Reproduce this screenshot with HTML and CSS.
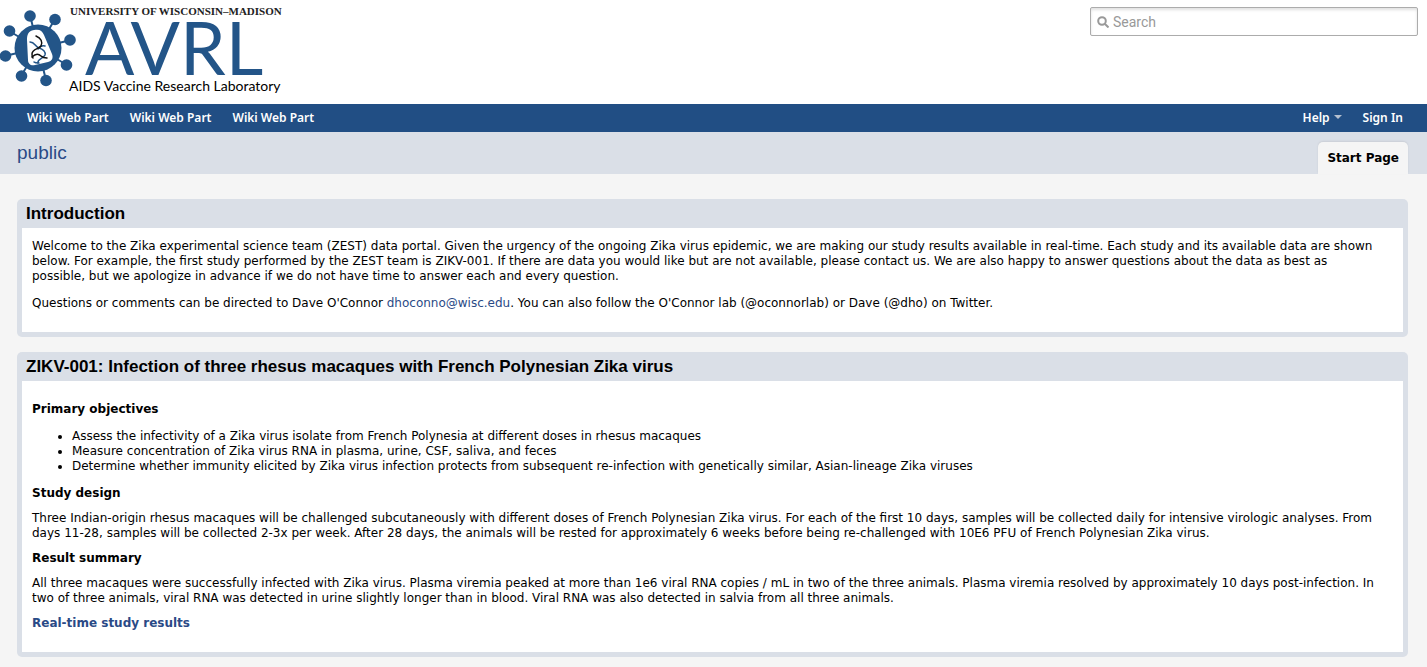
FILE: index.html
```
<!DOCTYPE html>
<html lang="en">
<head>
    <meta charset="UTF-8">
    <meta name="viewport" content="width=device-width, initial-scale=1.0">
    <title>Start Page: public</title>
    <link rel="stylesheet" href="styles.css">
</head>
<body>
    <header class="header">
        <a class="logo" href="#" aria-label="AVRL home">
            <svg width="290" height="104" viewBox="0 0 290 104">
                <!-- virus -->
                <g stroke="#235588" stroke-width="2">
                    <path d="M38 48L30 15M38 48L55 19M38 48L71 40M38 48L67 65M38 48L46 80M38 48L21 76M38 48L5 56M38 48L9 31"/>
                </g>
                <g fill="#235588">
                    <circle cx="38" cy="48" r="23.5"/>
                    <circle cx="30" cy="16" r="5.8"/>
                    <circle cx="55" cy="19.5" r="5.8"/>
                    <circle cx="70" cy="40" r="5.8"/>
                    <circle cx="66.5" cy="65" r="5.8"/>
                    <circle cx="46" cy="80.5" r="5.8"/>
                    <circle cx="21.5" cy="76" r="5.8"/>
                    <circle cx="5.5" cy="56" r="5.8"/>
                    <circle cx="9.5" cy="31" r="5.8"/>
                </g>
                <path fill="#fff" d="M34 30c5-1 8 0 10 5l8 19c1.5 4 0 7-4 8l-13 3c-4 1-7-1-7-5l-1-20c0-5 1-9 7-10z"/>
                <!-- dna strands -->
                <g fill="none" stroke-linecap="round" stroke-width="1.5">
                    <path stroke="#235588" d="M30 42C35 42 35 47 39 48C43 49 46 52 45 55C43 59 37 59 38 63"/>
                    <path stroke="#235588" d="M45 46C42 45 40 46 38 49M34 62C35 63 37 63 39 63"/>
                    <path stroke="#111" d="M36 36C41 38 43 42 41 46C39 49 32 49 32 54C32 56 32 57 33 58"/>
                    <path stroke="#111" d="M32 57C36 53 39 54 41 56C43 58 45 58 47 58"/>
                </g>
                <text class="logo-top" x="70" y="15">UNIVERSITY OF WISCONSIN–MADISON</text>
                <text class="logo-name" x="85" y="75">AVRL</text>
                <text class="logo-bottom" x="69" y="91">AIDS Vaccine Research Laboratory</text>
            </svg>
        </a>
        <form class="search">
            <svg width="12" height="12" viewBox="0 0 12 12" fill="none" stroke="#999" stroke-width="2">
                <circle cx="5" cy="5" r="3.8"/>
                <path d="M8 8l3.5 3.5"/>
            </svg>
            <input type="text" placeholder="Search" aria-label="Search">
        </form>
    </header>

    <nav class="menubar">
        <div class="menu-left">
            <a href="#">Wiki Web Part</a>
            <a href="#">Wiki Web Part</a>
            <a href="#">Wiki Web Part</a>
        </div>
        <div class="menu-right">
            <button type="button">Help <span class="arrow"></span></button>
            <a href="#">Sign In</a>
        </div>
    </nav>

    <div class="folder-bar">
        <a class="folder-title" href="#">public</a>
        <a class="tab" href="#">Start Page</a>
    </div>

    <main class="content">
        <section class="panel">
            <h2>Introduction</h2>
            <div class="panel-body">
                <p>Welcome to the Zika experimental science team (ZEST) data portal. Given the urgency of the ongoing Zika virus epidemic, we are making our study results available in real-time. Each study and its available data are shown below. For example, the first study performed by the ZEST team is ZIKV-001. If there are data you would like but are not available, please contact us. We are also happy to answer questions about the data as best as possible, but we apologize in advance if we do not have time to answer each and every question.</p>
                <p>Questions or comments can be directed to Dave O'Connor <a href="mailto:dhoconno@wisc.edu">dhoconno@wisc.edu</a>. You can also follow the O'Connor lab (@oconnorlab) or Dave (@dho) on Twitter.</p>
            </div>
        </section>

        <section class="panel">
            <h2>ZIKV-001: Infection of three rhesus macaques with French Polynesian Zika virus</h2>
            <div class="panel-body study">
                <h3>Primary objectives</h3>
                <ul>
                    <li>Assess the infectivity of a Zika virus isolate from French Polynesia at different doses in rhesus macaques</li>
                    <li>Measure concentration of Zika virus RNA in plasma, urine, CSF, saliva, and feces</li>
                    <li>Determine whether immunity elicited by Zika virus infection protects from subsequent re-infection with genetically similar, Asian-lineage Zika viruses</li>
                </ul>
                <h3>Study design</h3>
                <p>Three Indian-origin rhesus macaques will be challenged subcutaneously with different doses of French Polynesian Zika virus. For each of the first 10 days, samples will be collected daily for intensive virologic analyses. From days 11-28, samples will be collected 2-3x per week. After 28 days, the animals will be rested for approximately 6 weeks before being re-challenged with 10E6 PFU of French Polynesian Zika virus.</p>
                <h3>Result summary</h3>
                <p>All three macaques were successfully infected with Zika virus. Plasma viremia peaked at more than 1e6 viral RNA copies / mL in two of the three animals. Plasma viremia resolved by approximately 10 days post-infection. In two of three animals, viral RNA was detected in urine slightly longer than in blood. Viral RNA was also detected in salvia from all three animals.</p>
                <h3><a href="#">Real-time study results</a></h3>
            </div>
        </section>
    </main>
</body>
</html>
```
FILE: styles.css
```
* {
    margin: 0;
    padding: 0;
    box-sizing: border-box;
}

body {
    background: #f5f5f5;
    color: #000;
    font-family: Verdana, 'DejaVu Sans', sans-serif;
    font-size: 12px;
    line-height: 15px;
}

a {
    color: #2a4a86;
    text-decoration: none;
}

a:hover {
    text-decoration: underline;
}

.header {
    background: #fff;
    display: flex;
    justify-content: space-between;
    align-items: flex-start;
    padding-right: 9px;
}

.logo svg {
    display: block;
}

.logo-top {
    font: bold 11px 'Liberation Serif', serif;
    fill: #222;
}

.logo-name {
    font: 73px Lato, sans-serif;
    fill: #235588;
}

.logo-bottom {
    font: 14px Lato, sans-serif;
    fill: #000;
}

.search {
    display: flex;
    align-items: center;
    gap: 4px;
    width: 328px;
    height: 29px;
    margin-top: 7px;
    padding: 0 7px 0 6px;
    border: 1px solid #acacac;
    border-radius: 2px;
    box-shadow: inset 0 2px 3px rgba(0, 0, 0, 0.12);
}

.search input {
    flex: 1;
    border: 0;
    outline: 0;
    background: transparent;
    font: 14px Roboto, sans-serif;
}

.search input::placeholder {
    color: #999;
    opacity: 1;
}

.menubar {
    background: #214e84;
    height: 28px;
    display: flex;
    justify-content: space-between;
    align-items: center;
    padding: 0 24px 2px 27px;
}

.menu-left,
.menu-right {
    display: flex;
    align-items: center;
    gap: 21px;
}

.menubar a,
.menubar button {
    color: #fff;
    font: 600 12px/15px 'Noto Sans', sans-serif;
    background: none;
    border: 0;
}

.menubar button {
    display: flex;
    align-items: center;
    gap: 4px;
    cursor: pointer;
}

.arrow {
    border: 4px solid transparent;
    border-top-color: #b5c0cf;
    border-bottom: 0;
}

.folder-bar {
    background: #dadfe7;
    height: 42px;
    display: flex;
    justify-content: space-between;
    align-items: flex-end;
    padding: 0 19px 0 17px;
}

.folder-title {
    font: 19px/22px 'Liberation Sans', Arial, sans-serif;
    align-self: flex-start;
    margin-top: 10px;
}

.tab {
    background: #f5f5f5;
    color: #000;
    font-weight: bold;
    line-height: 32px;
    padding: 0 9px;
    border-radius: 5px 5px 0 0;
    box-shadow: 0 -1px 2px rgba(0, 0, 0, 0.08);
}

.content {
    padding: 25px 19px 10px 17px;
}

.panel {
    background: #dadfe7;
    border-radius: 5px;
    padding: 0 5px 5px;
    margin-bottom: 15px;
}

.panel:last-child {
    margin-bottom: 0;
}

.panel h2 {
    font: bold 17px/29px 'Liberation Sans', Arial, sans-serif;
    padding: 0 4px;
}

.panel-body {
    background: #fff;
    padding: 11px 20px 21px 10px;
}

.panel-body p + p {
    margin-top: 12px;
}

.study h3 {
    font-size: 12px;
    margin: 10px 0;
}

.study h3:last-child {
    margin-bottom: 0;
}

.study ul {
    margin: 12px 0;
    padding-left: 40px;
}
```
